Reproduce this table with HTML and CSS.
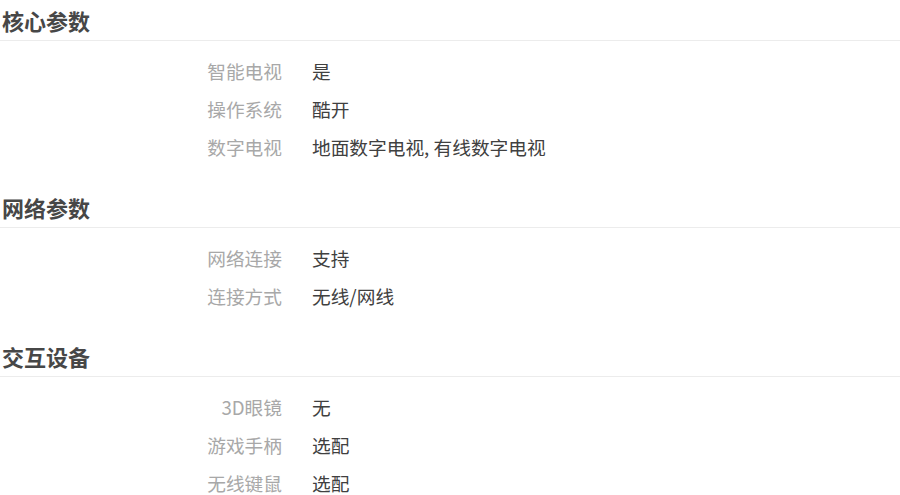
FILE: index.html
```html
<!DOCTYPE html>
<html lang="zh-CN">
<head>
<meta charset="utf-8">
<title>参数</title>
<link rel="stylesheet" href="styles.css">
</head>
<body>
<div class="specs">
  <section class="group">
    <h2 class="group-title">核心参数</h2>
    <dl class="rows">
      <div class="row"><dt>智能电视</dt><dd>是</dd></div>
      <div class="row"><dt>操作系统</dt><dd>酷开</dd></div>
      <div class="row"><dt>数字电视</dt><dd>地面数字电视, 有线数字电视</dd></div>
    </dl>
  </section>
  <section class="group">
    <h2 class="group-title">网络参数</h2>
    <dl class="rows">
      <div class="row"><dt>网络连接</dt><dd>支持</dd></div>
      <div class="row"><dt>连接方式</dt><dd>无线/网线</dd></div>
    </dl>
  </section>
  <section class="group">
    <h2 class="group-title">交互设备</h2>
    <dl class="rows">
      <div class="row"><dt>3D眼镜</dt><dd>无</dd></div>
      <div class="row"><dt>游戏手柄</dt><dd>选配</dd></div>
      <div class="row"><dt>无线键鼠</dt><dd>选配</dd></div>
    </dl>
  </section>
</div>
</body>
</html>
```
FILE: styles.css
```css
html, body {
  margin: 0;
  padding: 0;
  background: #fff;
}
body {
  font-family: "Noto Sans CJK SC", "Noto Sans", sans-serif;
  color: #333;
}
.specs {
  display: flex;
  flex-direction: column;
}
.group-title {
  margin: 0;
  height: 40px;
  line-height: 40px;
  padding-left: 2px;
  font-size: 22px;
  font-weight: 700;
  color: #474747;
  border-bottom: 1px solid #ececec;
}
.rows {
  margin: 0;
  padding: 11px 0 21px;
  display: flex;
  flex-direction: column;
}
.row {
  display: flex;
  height: 38px;
  line-height: 38px;
  font-size: 18.7px;
}
.row dt {
  width: 282px;
  text-align: right;
  color: #a8a8a8;
}
.row dd {
  margin: 0 0 0 30px;
  color: #404040;
}
```
